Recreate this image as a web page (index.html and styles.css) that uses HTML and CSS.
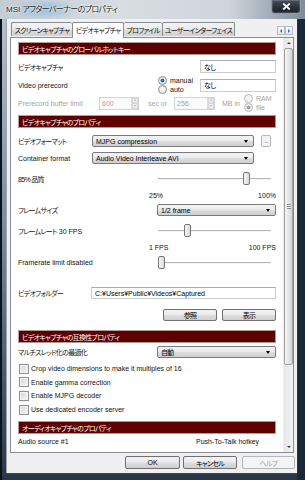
FILE: index.html
```html
<!DOCTYPE html>
<html lang="ja">
<head>
<meta charset="utf-8">
<link rel="stylesheet" href="styles.css">
</head>
<body>
<div class="window">
  <div class="titlebar">
    <span class="title">MSI <span class="ja">アフターバーナーのプロパティ</span></span>
    <div class="close"><svg width="9" height="7" viewBox="0 0 9 7"><path d="M1.2 0.6 L7.8 6.4 M7.8 0.6 L1.2 6.4" stroke="#fff" stroke-width="1.9"/></svg></div>
  </div>
  <div class="client">
    <div class="tabrow">
      <div class="tab t1 ja">スクリーンキャプチャ</div>
      <div class="tab t2 active ja">ビデオキャプチャ</div>
      <div class="tab t3 ja">プロファイル</div>
      <div class="tab t4 ja">ユーザーインターフェイス</div>
      <div class="tabarrows">
        <span class="tabarrow"><i class="tri-l"></i></span>
        <span class="tabarrow"><i class="tri-r"></i></span>
      </div>
    </div>
    <div class="panel">
      <div class="content">
        <div class="sect ja">ビデオキャプチャのグローバルホットキー</div>
        <div class="row r-hotkey">
          <span class="lbl ja">ビデオキャプチャ</span>
          <div class="edit w-hot ja">なし</div>
        </div>
        <div class="row r-pre">
          <span class="lbl">Video prerecord</span>
          <div class="radios w-rad1">
            <span class="radio on">manual</span>
            <span class="radio">auto</span>
          </div>
          <div class="edit w-hot ja">なし</div>
        </div>
        <div class="row r-buf dis">
          <span class="lbl">Prerecord buffer limit</span>
          <div class="spin w-spin1"><span class="spin-val">600</span><span class="spin-btns"><i class="sp-up"></i><i class="sp-dn"></i></span></div>
          <span class="unit u-sec">sec or</span>
          <div class="spin w-spin2"><span class="spin-val">256</span><span class="spin-btns"><i class="sp-up"></i><i class="sp-dn"></i></span></div>
          <span class="unit u-mb">MB in</span>
          <div class="radios w-rad2">
            <span class="radio">RAM</span>
            <span class="radio on">file</span>
          </div>
        </div>

        <div class="sect s2 ja">ビデオキャプチャのプロパティ</div>
        <div class="row r-format">
          <span class="lbl ja">ビデオフォーマット</span>
          <div class="combo w-fmt"><span class="combo-txt">MJPG compression</span><i class="arrow"></i></div>
          <div class="btn btn-dots dis-btn">...</div>
        </div>
        <div class="row r-cont">
          <span class="lbl">Container format</span>
          <div class="combo w-fmt"><span class="combo-txt">Audio Video Interleave AVI</span><i class="arrow"></i></div>
        </div>
        <div class="row r-slider r-q">
          <span class="lbl ja">85% 品質</span>
          <div class="slider"><span class="track"></span><span class="thumb" style="left:85px"></span></div>
        </div>
        <div class="row r-scale r-scale1">
          <span>25%</span><span>100%</span>
        </div>
        <div class="row r-fsize">
          <span class="lbl ja">フレームサイズ</span>
          <div class="combo w-right"><span class="combo-txt">1/2 frame</span><i class="arrow"></i></div>
        </div>
        <div class="row r-slider r-fr">
          <span class="lbl"><span class="ja">フレームレート</span> 30 FPS</span>
          <div class="slider"><span class="track"></span><span class="thumb" style="left:26px"></span></div>
        </div>
        <div class="row r-scale r-scale2">
          <span>1 FPS</span><span>100 FPS</span>
        </div>
        <div class="row r-slider r-lim">
          <span class="lbl">Framerate limit disabled</span>
          <div class="slider"><span class="track"></span><span class="thumb" style="left:0px"></span></div>
        </div>
        <div class="row r-folder">
          <span class="lbl ja">ビデオフォルダー</span>
          <div class="edit w-folder">C:¥Users¥Public¥Videos¥Captured</div>
        </div>
        <div class="row r-fbtns">
          <div class="btn w-fbtn ja">参照</div>
          <div class="btn w-fbtn ja">表示</div>
        </div>

        <div class="sect s3 ja">ビデオキャプチャの互換性プロパティ</div>
        <div class="row r-mt">
          <span class="lbl ja">マルチスレッド化の最適化</span>
          <div class="combo w-right"><span class="combo-txt ja">自動</span><i class="arrow"></i></div>
        </div>
        <div class="checks">
          <span class="chk">Crop video dimensions to make it multiples of 16</span>
          <span class="chk">Enable gamma correction</span>
          <span class="chk">Enable MJPG decoder</span>
          <span class="chk">Use dedicated encoder server</span>
        </div>

        <div class="sect s4 ja">オーディオキャプチャのプロパティ</div>
        <div class="row r-audio">
          <span class="lbl">Audio source #1</span>
          <span class="ptt">Push-To-Talk hotkey</span>
        </div>
      </div>
      <div class="scrollbar">
        <div class="sb-btn"><i class="sb-up"></i></div>
        <div class="sb-thumb"><span class="grip"></span></div>
        <div class="sb-track"></div>
        <div class="sb-btn"><i class="sb-dn"></i></div>
      </div>
    </div>
    <div class="dlgbuttons">
      <div class="btn w-ok">OK</div>
      <div class="btn w-cancel ja">キャンセル</div>
      <div class="btn w-help dis-btn ja">ヘルプ</div>
    </div>
  </div>
</div>
</body>
</html>
```

FILE: styles.css
```css
* { box-sizing: border-box; }
html, body { margin: 0; padding: 0; }
body {
  width: 305px;
  height: 480px;
  overflow: hidden;
  background: #0b1520;
  font-family: "Liberation Sans", "Noto Sans CJK JP", sans-serif;
  font-size: 7px;
  font-feature-settings: "palt";
  color: #111;
}
.ja { letter-spacing: -0.7px; }

.window {
  width: 305px;
  height: 480px;
  display: flex;
  flex-direction: column;
  background:
    linear-gradient(to right, #0a121c 0 2px, transparent 2px 297px, #1a2736 297px),
    linear-gradient(to bottom, #b8c2cc 0, #7f8d9c 45%, #2a3646 100%);
}

.titlebar {
  height: 19px;
  flex: none;
  display: flex;
  align-items: flex-start;
  padding: 0 4px 0 6px;
  background:
    radial-gradient(ellipse 36px 10px at 45px 9px, rgba(70,160,235,0.45), transparent),
    linear-gradient(to right, #c4ccd4 0, #d8dde2 40%, #cfd5db 75%, #7d8b99 100%);
}
.title {
  margin-top: 5px;
  font-size: 8px;
  line-height: 10px;
  color: #1c1c1c;
  text-shadow: 0 0 3px #fff, 0 0 2px #fff;
  white-space: nowrap;
}
.title .ja { letter-spacing: -0.6px; }
.close {
  margin-left: auto;
  width: 30px;
  height: 14px;
  display: flex;
  align-items: center;
  justify-content: center;
  border: 1px solid #8d99a5;
  border-top: none;
  border-radius: 0 0 4px 4px;
  background: linear-gradient(to bottom, #4a545f 0, #2b333c 50%, #1d232a 100%);
  box-shadow: inset 0 0 0 1px rgba(255,255,255,0.15);
}

.client {
  flex: 1;
  margin: 0 8px 7px 7px;
  background: #f0f0f0;
  display: flex;
  flex-direction: column;
  padding: 2px 3px 4px 3px;
  box-shadow: 1px 0 0 #2a3440, -1px 0 0 #9aa6b2, 0 1px 0 #3a4654;
}

/* tabs */
.tabrow {
  height: 16px;
  flex: none;
  display: flex;
  align-items: flex-end;
  padding-left: 1px;
}
.tab {
  height: 14px;
  display: flex;
  align-items: center;
  justify-content: center;
  border: 1px solid #898c95;
  border-bottom: none;
  border-right: none;
  border-radius: 2px 2px 0 0;
  background: linear-gradient(to bottom, #f4f4f4 0, #ebebeb 45%, #dddddd 55%, #d2d2d2 100%);
  white-space: nowrap;
  margin-bottom: 1px;
  overflow: hidden;
}
.tab.t4 { border-right: 1px solid #898c95; }
.tab.t3 { border-left: none; }
.tab.t1 { width: 61px; }
.tab.t2 { width: 52px; }
.tab.t3 { width: 38px; }
.tab.t4 { width: 73px; }
.tab.active {
  height: 16px;
  background: #fff;
  border-right: 1px solid #898c95;
  margin-bottom: -1px;
  position: relative;
  z-index: 2;
  padding-bottom: 2px;
}
.tabarrows {
  margin-left: auto;
  margin-right: 1px;
  display: flex;
  margin-bottom: 2px;
}
.tabarrow {
  width: 8px;
  height: 9px;
  border: 1px solid #b5bcc5;
  background: linear-gradient(#fbfbfb, #e2e6ea);
  display: flex;
  align-items: center;
  justify-content: center;
}
.tri-l { width: 0; height: 0; border-top: 2px solid transparent; border-bottom: 2px solid transparent; border-right: 2px solid #3a66b0; }
.tri-r { width: 0; height: 0; border-top: 2px solid transparent; border-bottom: 2px solid transparent; border-left: 2px solid #3a66b0; }

/* panel */
.panel {
  height: 416px;
  flex: none;
  width: 284px;
  border: 1px solid #898c95;
  background: #fff;
  display: flex;
  position: relative;
  z-index: 1;
}
.content {
  flex: 1;
  overflow: hidden;
  padding: 4px 7px 0 7px;
  display: flex;
  flex-direction: column;
}

.sect {
  height: 13px;
  flex: none;
  background: #5e0000;
  border: 1px solid #b59a9a;
  color: #fff;
  padding-left: 3px;
  display: flex;
  align-items: center;
  white-space: nowrap;
}
.s2 { margin-top: 3px; }
.s3 { margin-top: 9px; }
.s4 { margin-top: 5px; }

.row {
  display: flex;
  align-items: center;
  flex: none;
  white-space: nowrap;
}
.lbl { flex: 1; }
.dis { color: #a3a3a3; }

.r-hotkey { height: 13px; margin-top: 5px; }
.r-pre { height: 18px; margin-top: 3px; }
.r-buf { height: 18px; }
.r-format { height: 12px; margin-top: 7px; }
.r-cont { height: 12px; margin-top: 5px; }
.r-q { margin-top: 8px; }
.r-scale { height: 10px; padding-left: 131px; justify-content: space-between; }
.r-scale1 { margin-top: 5px; }
.r-fsize { height: 12px; margin-top: 4px; }
.r-fr { margin-top: 8px; }
.r-scale2 { margin-top: 5px; }
.r-lim { margin-top: 4px; }
.r-folder { height: 12px; margin-top: 18px; }
.r-fbtns { height: 12px; margin-top: 10px; justify-content: flex-end; gap: 5px; }
.r-mt { height: 12px; margin-top: 3px; }
.r-audio { height: 11px; margin-top: 2px; }
.ptt { width: 80px; }

/* edit boxes */
.edit {
  height: 13px;
  border: 1px solid #c9ccd1;
  border-top-color: #abadb3;
  background: #fff;
  padding-left: 3px;
  display: flex;
  align-items: center;
  color: #000;
}
.w-hot { width: 76px; }
.w-folder { width: 185px; height: 12px; }

/* radios */
.radios {
  display: flex;
  flex-direction: column;
}
.w-rad1 { width: 42px; }
.w-rad2 { width: 32px; }
.radio {
  height: 9px;
  display: flex;
  align-items: center;
}
.radio::before {
  content: "";
  width: 7px;
  height: 7px;
  border-radius: 50%;
  border: 1px solid #8c8f94;
  background: radial-gradient(circle, #ffffff 0, #dcdcdc 100%);
  margin-right: 3px;
  flex: none;
}
.radio.on::before {
  background: radial-gradient(circle, #2d7fd0 0, #1a5fae 1.6px, #e4e4e4 2.2px, #f4f4f4 100%);
}
.dis .radio::before { border-color: #b8b8b8; background: #f3f3f3; }
.dis .radio.on::before { background: radial-gradient(circle, #a8a8a8 0, #9c9c9c 1.6px, #f3f3f3 2.2px); }

/* spin */
.spin {
  height: 13px;
  border: 1px solid #cfd2d6;
  background: #fbfbfb;
  display: flex;
  align-items: stretch;
}
.w-spin1 { width: 40px; }
.w-spin2 { width: 41px; }
.spin-val { flex: 1; padding-left: 2px; display: flex; align-items: center; }
.spin-btns {
  width: 7px;
  display: flex;
  flex-direction: column;
  border-left: 1px solid #dcdcdc;
}
.spin-btns i {
  flex: 1;
  display: flex;
  align-items: center;
  justify-content: center;
  background: #f1f1f1;
  border: 1px solid #d6d6d6;
}
.sp-up::after { content: ""; border-left: 1.5px solid transparent; border-right: 1.5px solid transparent; border-bottom: 2px solid #b0b0b0; }
.sp-dn::after { content: ""; border-left: 1.5px solid transparent; border-right: 1.5px solid transparent; border-top: 2px solid #b0b0b0; }
.unit { display: block; }
.u-sec { width: 35px; padding-left: 9px; }
.u-mb { width: 29px; padding-left: 7px; }

/* combo */
.combo {
  height: 12px;
  border: 1px solid #7a7a7a;
  border-radius: 2px;
  background: linear-gradient(to bottom, #f3f3f3 0, #ebebeb 45%, #dddddd 55%, #cfcfcf 100%);
  display: flex;
  align-items: center;
  color: #000;
}
.combo-txt { flex: 1; padding-left: 3px; }
.arrow {
  width: 0;
  height: 0;
  border-left: 2.5px solid transparent;
  border-right: 2.5px solid transparent;
  border-top: 3px solid #000;
  margin-right: 5px;
}
.w-fmt { width: 162px; }
.r-cont .w-fmt { margin-right: 22px; }
.r-format .w-fmt { margin-right: 7px; }
.w-right { width: 119px; }

/* buttons */
.btn {
  height: 12px;
  border: 1px solid #707070;
  border-radius: 2px;
  background: linear-gradient(to bottom, #f3f3f3 0, #ebebeb 45%, #dddddd 55%, #cfcfcf 100%);
  display: flex;
  align-items: center;
  justify-content: center;
  color: #000;
  white-space: nowrap;
}
.dis-btn {
  border-color: #b3b6ba;
  background: #f4f4f4;
  color: #a3a3a3;
}
.btn-dots {
  width: 10px;
  height: 12px;
  margin-right: 5px;
  font-size: 7px;
  line-height: 7px;
  letter-spacing: -0.8px;
  color: #8a8a8a;
  padding: 0 0 1px 0;
}
.w-fbtn { width: 54px; }

/* slider */
.r-slider { height: 13px; }
.slider {
  position: relative;
  width: 113px;
  height: 13px;
  margin-right: 5px;
}
.track {
  position: absolute;
  left: 0;
  right: 0;
  top: 6px;
  height: 2px;
  border-top: 1px solid #b8b8b8;
  border-bottom: 1px solid #f4f4f4;
}
.thumb {
  position: absolute;
  top: 0;
  width: 7px;
  height: 13px;
  border: 1px solid #767676;
  border-radius: 2px;
  background: linear-gradient(to right, #f6f6f6, #d9d9d9);
}

/* checks */
.checks {
  margin-top: 4px;
  display: flex;
  flex-direction: column;
  flex: none;
}
.chk {
  height: 13.6px;
  display: flex;
  align-items: center;
  padding-left: 1px;
  white-space: nowrap;
}
.chk::before {
  content: "";
  width: 8px;
  height: 8px;
  border: 1px solid #8f8f8f;
  background: linear-gradient(135deg, #d6d6d6 0, #f6f6f6 100%);
  box-shadow: inset 0 0 0 1px #f4f4f4;
  margin-right: 2px;
  flex: none;
}

/* scrollbar */
.scrollbar {
  width: 10px;
  flex: none;
  display: flex;
  flex-direction: column;
  background: linear-gradient(to right, #e6e6e6, #f3f3f3);
  border-left: 1px solid #ececec;
}
.sb-btn {
  height: 10px;
  flex: none;
  display: flex;
  align-items: center;
  justify-content: center;
}
.sb-up { width: 0; height: 0; border-left: 2px solid transparent; border-right: 2px solid transparent; border-bottom: 2px solid #3c3c3c; }
.sb-dn { width: 0; height: 0; border-left: 2px solid transparent; border-right: 2px solid transparent; border-top: 2px solid #3c3c3c; }
.sb-thumb {
  height: 317px;
  flex: none;
  border: 1px solid #a0a0a0;
  border-radius: 2px;
  background: linear-gradient(to right, #f5f5f5, #e2e2e2 60%, #d6d6d6);
  display: flex;
  align-items: center;
  justify-content: center;
}
.grip {
  width: 4px;
  height: 5px;
  background: repeating-linear-gradient(to bottom, #8a8a8a 0 1px, #f0f0f0 1px 2px);
}
.sb-track { flex: 1; }

/* dialog buttons */
.dlgbuttons {
  margin-top: 3px;
  height: 13px;
  flex: none;
  display: flex;
  justify-content: flex-end;
  margin-right: -1px;
}
.dlgbuttons .btn { height: 13px; }
.w-ok { width: 55px; margin-right: 3px; }
.w-cancel { width: 54px; margin-right: 5px; }
.w-help { width: 53px; }
```
